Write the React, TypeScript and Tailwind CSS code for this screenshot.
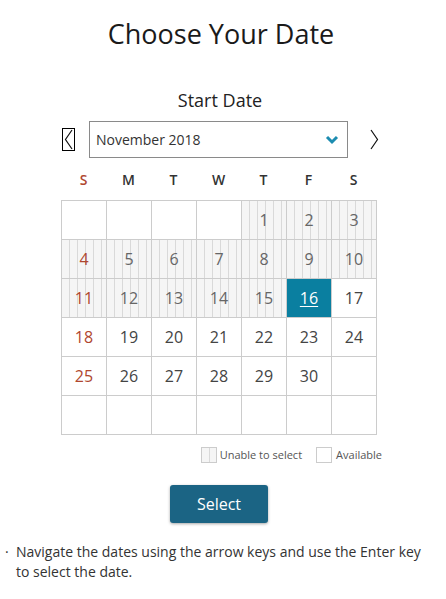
import React from "react"

// November 2018 starts on a Thursday
const weeks: (number | null)[][] = [
    [null, null, null, null, 1, 2, 3],
    [4, 5, 6, 7, 8, 9, 10],
    [11, 12, 13, 14, 15, 16, 17],
    [18, 19, 20, 21, 22, 23, 24],
    [25, 26, 27, 28, 29, 30, null],
    [null, null, null, null, null, null, null],
]

const days = ["S", "M", "T", "W", "T", "F", "S"]
const today = 16

const stripes =
    "bg-[#f5f5f5] bg-[repeating-linear-gradient(90deg,transparent_0px,transparent_7px,#d9d9d9_7px,#d9d9d9_8px)]"

function DayCell({ day, col }: { day: number | null; col: number }) {
    const disabled = day !== null && day < today
    const selected = day === today
    const sunday = col === 0

    let cls = "h-[39px] border-r border-b border-[#cccccc] flex items-center justify-center text-[16px]"
    if (selected) cls += " bg-[#0a7fa0] text-white"
    else if (disabled) cls += " " + stripes
    else cls += " bg-white"

    const color = selected ? "" : sunday ? " text-[#b0472f]" : disabled ? " text-[#666666]" : " text-[#444444]"

    return (
        <div className={cls + color}>
            {day !== null && <span className={selected ? "underline underline-offset-2" : ""}>{day}</span>}
        </div>
    )
}

export default function App() {
    return (
        <div className="w-[446px] h-[599px] bg-white overflow-hidden font-['Open_Sans','Noto_Sans',sans-serif] text-[#333333]">
            <h1 className="pt-[16px] pr-[4px] text-center text-[27px] leading-[36px] text-[#1a1a1a]">Choose Your Date</h1>

            <h2 className="mt-[36px] pr-[6px] text-center text-[18px] leading-[24px] text-[#222222]">Start Date</h2>

            <div className="mt-[9px] flex items-center">
                <button className="ml-[62px] w-[13px] h-[23px] border border-black flex items-center justify-center">
                    <svg width="9" height="21" viewBox="0 0 9 21" fill="none" stroke="#111" strokeWidth="1.2">
                        <path d="M8 1 L1.5 10.5 L8 20" />
                    </svg>
                </button>
                <div className="ml-[14px] w-[259px] h-[37px] border border-[#8a8a8a] flex items-center justify-between px-[6px]">
                    <span className="text-[14px] text-[#333333]">November 2018</span>
                    <svg width="14" height="10" viewBox="0 0 14 10" className="mr-[2px]">
                        <path d="M2 2 L7 7 L12 2" fill="none" stroke="#1c8cb0" strokeWidth="3" />
                    </svg>
                </div>
                <button className="ml-[20px] w-[12px] h-[23px] flex items-center justify-center">
                    <svg width="9" height="21" viewBox="0 0 9 21" fill="none" stroke="#111" strokeWidth="1.2">
                        <path d="M1 1 L7.5 10.5 L1 20" />
                    </svg>
                </button>
            </div>

            <div className="ml-[61px] mt-[12px] grid grid-cols-[repeat(7,45px)]">
                {days.map((d, i) => (
                    <div
                        key={i}
                        className={"text-center text-[14px] font-semibold leading-[20px] " + (i === 0 ? "text-[#b0472f]" : "text-[#333333]")}
                    >
                        {d}
                    </div>
                ))}
            </div>

            <div className="ml-[61px] mt-[10px] w-[316px] grid grid-cols-[repeat(7,45px)] border-l border-t border-[#cccccc]">
                {weeks.map((week, w) =>
                    week.map((day, c) => <DayCell key={w + "-" + c} day={day} col={c} />)
                )}
            </div>

            <div className="mt-[12px] flex items-center justify-end pr-[64px] text-[11px] text-[#555555]">
                <span className={"w-[16px] h-[16px] border border-[#cccccc] " + stripes} />
                <span className="ml-[3px]">Unable to select</span>
                <span className="ml-[14px] w-[16px] h-[16px] border border-[#cccccc] bg-white" />
                <span className="ml-[4px]">Available</span>
            </div>

            <div className="mt-[21px] flex justify-center pr-[8px]">
                <button className="w-[98px] h-[38px] rounded-[3px] bg-[#1b6484] text-white text-[16px] shadow-[0_1px_3px_rgba(0,0,0,0.35)]">
                    Select
                </button>
            </div>

            <ul className="mt-[19px] pl-[16px] pr-[10px] text-[14px] leading-[20px] text-[#333333]">
                <li className="relative">
                    <span className="absolute left-[-11px] top-0">·</span>
                    Navigate the dates using the arrow keys and use the Enter key to select the date.
                </li>
            </ul>
        </div>
    )
}
